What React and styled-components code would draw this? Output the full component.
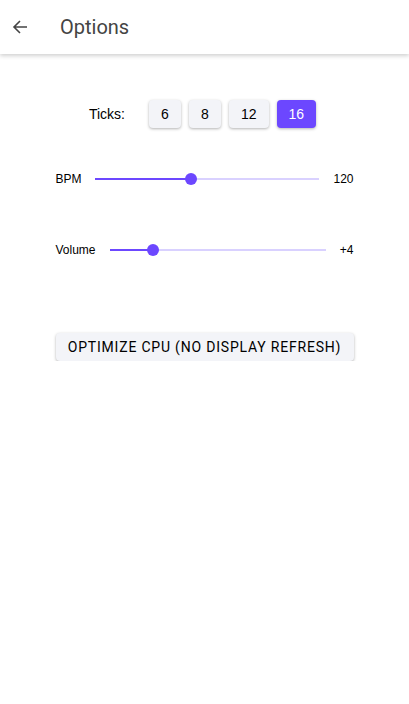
import React, { useState } from 'react';
import styled, { createGlobalStyle } from 'styled-components';

const GlobalStyle = createGlobalStyle`
  body {
    margin: 0;
    background: #fff;
    font-family: 'Liberation Sans', Arial, sans-serif;
  }
`;

const ArrowLeft = () => (
  <svg width="16" height="16" viewBox="0 0 16 16" fill="none">
    <path d="M15 8H2M8 2L2 8l6 6" stroke="#444" strokeWidth="1.6" />
  </svg>
);

const Slider = ({ value, min, max }) => {
  const pct = ((value - min) / (max - min)) * 100;
  return (
    <Track>
      <Active style={{ width: `${pct}%` }} />
      <Thumb style={{ left: `${pct}%` }} />
    </Track>
  );
};

const App = () => {
  const [ticks, setTicks] = useState(16);

  return (
    <>
      <GlobalStyle />
      <AppBar>
        <BackButton>
          <ArrowLeft />
        </BackButton>
        <Title>Options</Title>
      </AppBar>
      <Content>
        <TicksRow>
          <TicksLabel>Ticks:</TicksLabel>
          <TickGroup>
            {[6, 8, 12, 16].map((t) => (
              <TickButton key={t} selected={t === ticks} onClick={() => setTicks(t)}>
                {t}
              </TickButton>
            ))}
          </TickGroup>
        </TicksRow>

        <SliderRow>
          <Label gap={13}>BPM</Label>
          <Slider value={120} min={30} max={240} />
          <Value>120</Value>
        </SliderRow>

        <SliderRow spaced>
          <Label gap={14}>Volume</Label>
          <Slider value={4} min={0} max={20} />
          <Value>+4</Value>
        </SliderRow>

        <WideButton>OPTIMIZE CPU (NO DISPLAY REFRESH)</WideButton>
      </Content>
    </>
  );
};

export default App;

const AppBar = styled.header`
  height: 54px;
  display: flex;
  align-items: center;
  background: #fff;
  box-shadow: 0 2px 4px rgba(0, 0, 0, 0.18);
`;

const BackButton = styled.button`
  border: 0;
  background: none;
  padding: 0;
  margin-left: 12px;
  width: 16px;
  height: 16px;
  display: flex;
  cursor: pointer;
`;

const Title = styled.h1`
  margin: 0 0 0 32px;
  font-family: Roboto, sans-serif;
  font-weight: 400;
  font-size: 20px;
  color: #444;
`;

const Content = styled.main`
  width: 298px;
  margin: 0 auto;
  padding-top: 46px;
`;

const TicksRow = styled.div`
  display: flex;
  align-items: center;
  justify-content: center;
  gap: 24px;
  padding-right: 4px;
`;

const TicksLabel = styled.span`
  font-size: 14px;
  color: #000;
`;

const TickGroup = styled.div`
  display: flex;
  gap: 8px;
`;

const TickButton = styled.button`
  min-width: 32px;
  height: 28px;
  padding: 0 12px;
  border: 0;
  border-radius: 4px;
  font-family: 'Liberation Sans', Arial, sans-serif;
  font-size: 14px;
  background: ${(p) => (p.selected ? '#6c47ff' : '#f3f4f8')};
  color: ${(p) => (p.selected ? '#fff' : '#000')};
  box-shadow: 0 1px 3px rgba(0, 0, 0, 0.3);
  cursor: pointer;
`;

const SliderRow = styled.div`
  display: flex;
  align-items: center;
  height: 20px;
  margin-top: ${(p) => (p.spaced ? '51px' : '41px')};
`;

const Label = styled.span`
  font-size: 12px;
  color: #000;
  margin-right: ${(p) => p.gap}px;
`;

const Value = styled.span`
  font-size: 12px;
  color: #000;
  margin-left: 14px;
`;

const Track = styled.div`
  position: relative;
  flex: 1;
  height: 2px;
  background: #d9d1ff;
`;

const Active = styled.div`
  height: 100%;
  background: #6c47ff;
`;

const Thumb = styled.div`
  position: absolute;
  top: 50%;
  width: 12px;
  height: 12px;
  border-radius: 50%;
  background: #6c47ff;
  transform: translate(-50%, -50%);
`;

const WideButton = styled.button`
  display: block;
  width: 100%;
  height: 28px;
  margin-top: 73px;
  border: 0;
  border-radius: 4px;
  background: #f3f4f8;
  font-family: Roboto, sans-serif;
  font-size: 14px;
  letter-spacing: 0.8px;
  color: #000;
  box-shadow: 0 1px 3px rgba(0, 0, 0, 0.3);
  cursor: pointer;
`;
